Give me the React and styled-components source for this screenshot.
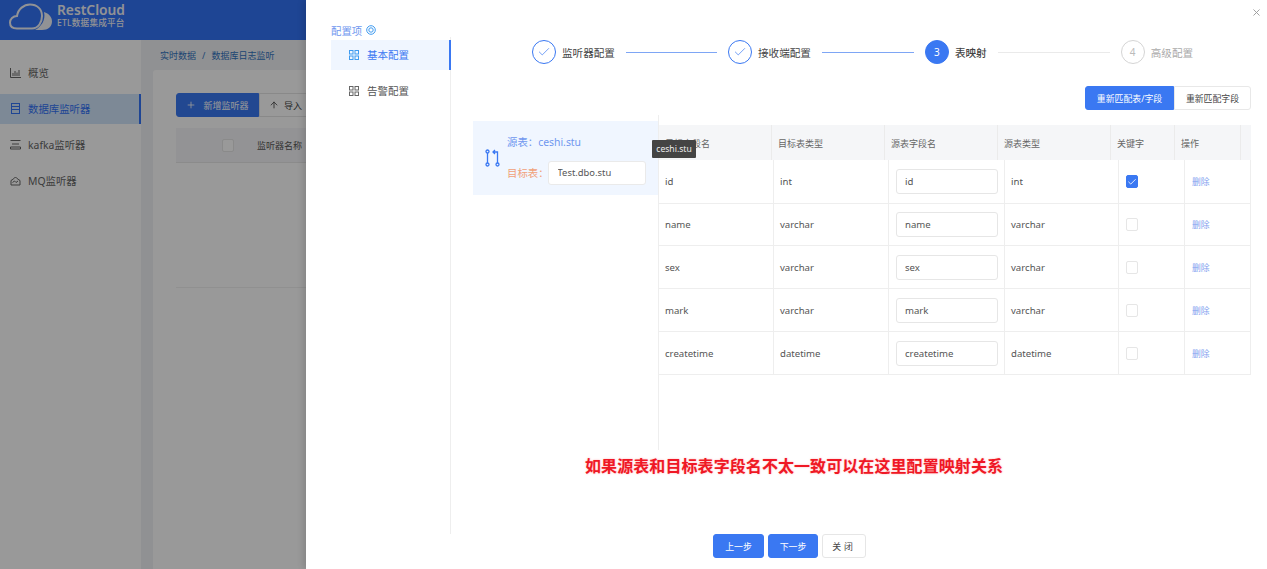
import React from "react";
import styled, { createGlobalStyle } from "styled-components";
import { Check, X, Plus, ArrowUp } from "lucide-react";

const GlobalStyle = createGlobalStyle`
  html, body {
    margin: 0;
    padding: 0;
    height: 100%;
    overflow: hidden;
    background: #fff;
  }
  * {
    box-sizing: border-box;
  }
  body, input, button {
    font-family: "Noto Sans", "Noto Sans CJK SC", sans-serif;
  }
`;

const Screen = styled.div`
  position: relative;
  width: 1267px;
  height: 569px;
  overflow: hidden;
`;

/* page behind the drawer */
const Page = styled.div`
  display: flex;
  flex-direction: column;
  height: 100%;
  background: #f0f2f5;
`;

const Header = styled.header`
  display: flex;
  align-items: center;
  gap: 5px;
  height: 40px;
  padding-left: 9px;
  background: #3273f7;
`;

const LogoMark = styled.svg`
  margin-top: -7px;
`;

const LogoText = styled.div`
  display: flex;
  flex-direction: column;
  color: #f2f4f8;
  margin-top: -10px;
`;

const LogoName = styled.span`
  font-size: 13.800px;
  font-weight: 600;
  line-height: 15px;
`;

const LogoSub = styled.span`
  font-size: 8.600px;
  font-weight: 500;
  line-height: 12px;
  letter-spacing: 0.2px;
`;

const PageBody = styled.div`
  display: flex;
  flex: 1;
`;

const Sidebar = styled.nav`
  width: 141px;
  padding-top: 18px;
  background: #fff;
`;

const SideItem = styled.div`
  display: flex;
  align-items: center;
  gap: 7px;
  height: 30px;
  margin-bottom: 6px;
  padding: 0 0 2px 10px;
  font-size: 10.4px;
  color: ${(p) => (p.$active ? "#3273f7" : "#666")};
  background: ${(p) => (p.$active ? "#d0e4fa" : "transparent")};
  border-right: ${(p) => (p.$active ? "2px solid #3273f7" : "none")};
`;

const Content = styled.main`
  flex: 1;
  padding: 9px 0 0 19px;
`;

const Crumbs = styled.div`
  display: flex;
  gap: 6px;
  height: 21px;
  font-size: 9px;
  line-height: 13px;
  color: #3273c0;
`;

const Card = styled.section`
  margin-left: -7px;
  height: 100%;
  padding: 23px 0 0 23px;
  background: #fff;
  border-radius: 3px;
`;

const Toolbar = styled.div`
  display: flex;
  height: 24px;
`;

const ToolButton = styled.div`
  display: flex;
  align-items: center;
  justify-content: center;
  gap: ${(p) => (p.$primary ? 7 : 5)}px;
  width: ${(p) => p.$w}px;
  font-size: 9px;
  color: ${(p) => (p.$primary ? "#fff" : "#444")};
  background: ${(p) => (p.$primary ? "#3a78f2" : "#fff")};
  border: 1px solid ${(p) => (p.$primary ? "#3a78f2" : "#e4e4e4")};
  border-radius: ${(p) => (p.$primary ? "3px 0 0 3px" : "0")};
`;

const GhostHead = styled.div`
  display: flex;
  align-items: center;
  height: 35px;
  margin-top: 11px;
  padding-left: 46px;
  gap: 23px;
  font-size: 9px;
  color: #555;
  background: #f5f6f8;
  border-bottom: 1px solid #e8e8e8;
`;

const GhostRule = styled.div`
  height: 1px;
  margin-top: 124px;
  background: #f0f0f0;
`;

const Mask = styled.div`
  position: absolute;
  inset: 0;
  background: rgba(0, 0, 0, 0.4);
`;

/* drawer */
const Drawer = styled.aside`
  position: absolute;
  top: 0;
  right: 0;
  bottom: 0;
  width: 961px;
  display: flex;
  flex-direction: column;
  background: #fff;
  box-shadow: -3px 0 6px rgba(0, 0, 0, 0.12);
`;

const CloseIcon = styled(X)`
  position: absolute;
  top: 7px;
  right: 5px;
  color: #999;
`;

const DrawerBody = styled.div`
  display: flex;
  height: 534px;
`;

const ConfigColumn = styled.div`
  display: flex;
  flex-direction: column;
  width: 145px;
  padding: 23px 0 0 25px;
`;

const ConfigTitle = styled.div`
  display: flex;
  align-items: center;
  gap: 4px;
  height: 14px;
  font-size: 10.4px;
  color: #6f97ef;
`;

const ConfigList = styled.div`
  flex: 1;
  padding-top: 3px;
  border-right: 1px solid #eeeeee;
`;

const ConfigItem = styled.div`
  display: flex;
  align-items: center;
  gap: 8px;
  height: 30px;
  margin-right: -1px;
  margin-bottom: 6px;
  padding: 0 0 1px 18px;
  font-size: 10.5px;
  color: ${(p) => (p.$active ? "#3a78f2" : "#555")};
  background: ${(p) => (p.$active ? "#f0f6ff" : "transparent")};
  border-right: ${(p) => (p.$active ? "2px solid #3a78f2" : "none")};
`;

const Main = styled.div`
  flex: 1;
  padding-top: 40px;
`;

const Steps = styled.div`
  display: flex;
  align-items: center;
  height: 24px;
  padding-left: 81px;
`;

const StepCircle = styled.div`
  display: flex;
  align-items: center;
  justify-content: center;
  width: 24px;
  height: 24px;
  border-radius: 50%;
  font-size: 10px;
  color: ${(p) => (p.$state === "wait" ? "#bbb" : p.$state === "now" ? "#fff" : "#3a78f2")};
  background: ${(p) => (p.$state === "now" ? "#3a78f2" : "#fff")};
  border: 1px solid ${(p) => (p.$state === "wait" ? "#d5d5d5" : "#3a78f2")};
`;

const StepLabel = styled.span`
  margin-left: 6px;
  font-size: 10.6px;
  font-weight: ${(p) => (p.$state === "now" ? 500 : 400)};
  color: ${(p) => (p.$state === "wait" ? "#aaa" : "#444")};
  white-space: nowrap;
`;

const StepLine = styled.div`
  width: ${(p) => p.$w}px;
  height: 1px;
  margin: 0 11px;
  background: ${(p) => (p.$done ? "#7ea6f5" : "#eaeaea")};
`;

const Actions = styled.div`
  display: flex;
  justify-content: flex-end;
  height: 24px;
  margin-top: 22px;
  padding-right: 16px;
`;

const ActionButton = styled.button`
  width: ${(p) => p.$w}px;
  padding: 0;
  font-size: 8.9px;
  color: ${(p) => (p.$primary ? "#fff" : "#444")};
  background: ${(p) => (p.$primary ? "#3a78f2" : "#fff")};
  border: 1px solid ${(p) => (p.$primary ? "#3a78f2" : "#e8e8e8")};
  border-radius: ${(p) => (p.$primary ? "3px 0 0 3px" : "0 3px 3px 0")};
`;

const MappingArea = styled.div`
  display: flex;
  height: 335px;
  margin: 5px 16px 0 22px;
`;

const TablePanel = styled.div`
  display: flex;
  align-items: center;
  gap: 7px;
  align-self: flex-start;
  width: 185px;
  height: 74px;
  margin-top: 6px;
  padding-left: 12px;
  background: #f0f6ff;
`;

const TableNames = styled.div`
  display: flex;
  flex-direction: column;
  gap: 9px;
`;

const NameRow = styled.div`
  display: flex;
  align-items: center;
  height: 24px;
  font-size: 10.4px;
  white-space: nowrap;
  color: ${(p) => (p.$target ? "#f0a078" : "#6f97ef")};
  margin-top: ${(p) => (p.$target ? "-2px" : "-2px")};
`;

const TargetInput = styled.input`
  width: 98px;
  height: 24px;
  margin-left: -1px;
  padding: 0 9px;
  font-size: 9.4px;
  color: #555;
  background: #fff;
  border: 1px solid #eaeaea;
  border-radius: 3px;
  outline: none;
`;

const TableWrap = styled.div`
  position: relative;
  width: 593px;
  padding-top: 10px;
  border-left: 1px solid #eeeeee;
`;

const Tooltip = styled.div`
  position: absolute;
  top: 25px;
  left: -7px;
  width: 44px;
  height: 18px;
  font-size: 8.6px;
  line-height: 18px;
  text-align: center;
  color: #eee;
  background: #444;
  border-radius: 1px;
`;

const HeadRow = styled.div`
  display: grid;
  grid-template-columns: 113px 113px 113px 113px 64px 66px 11px;
  height: 35px;
  background: #f5f6f8;
`;

const HeadCell = styled.div`
  display: flex;
  align-items: center;
  padding: 1px 0 0 6px;
  font-size: 9px;
  color: #666;
  border-right: ${(p) => (p.$plain ? "none" : "1px solid #ebebeb")};
`;

const BodyRow = styled.div`
  display: grid;
  grid-template-columns: 115px 115px 116px 114px 66px 66px;
  height: ${(p) => p.$h}px;
  border-bottom: 1px solid #eeeeee;
  border-right: 1px solid #eeeeee;
`;

const BodyCell = styled.div`
  display: flex;
  align-items: center;
  padding-left: ${(p) => (p.$wide ? 7 : 6)}px;
  font-size: 9.6px;
  color: #555;
  border-right: ${(p) => (p.$plain ? "none" : "1px solid #eeeeee")};
`;

const FieldInput = styled.input`
  width: 102px;
  height: 25px;
  padding: 0 8px;
  font-size: 9.6px;
  color: #555;
  background: #fff;
  border: 1px solid #e6e6e6;
  border-radius: 3px;
  outline: none;
`;

const Box = styled.span`
  display: flex;
  align-items: center;
  justify-content: center;
  width: 12px;
  height: 13px;
  color: #fff;
  background: ${(p) => (p.$on ? "#3a78f2" : "#fff")};
  border: 1px solid ${(p) => (p.$on ? "#3a78f2" : "#e6e6e6")};
  border-radius: 2px;
`;

const DeleteLink = styled.span`
  font-size: 8.8px;
  color: #7ea0ef;
`;

const Note = styled.div`
  margin: 4px 0 0 134px;
  font-size: 16px;
  font-weight: 700;
  line-height: 24px;
  letter-spacing: 0.08px;
  color: #ef1825;
  text-shadow: 0 0 2px rgba(255, 120, 130, 0.6);
  white-space: nowrap;
`;

const Footer = styled.footer`
  display: flex;
  justify-content: center;
  gap: 4px;
  padding-left: 6px;
`;

const FootButton = styled.button`
  width: ${(p) => p.$w}px;
  height: 24px;
  padding: 0;
  font-size: 8.9px;
  color: ${(p) => (p.$primary ? "#fff" : "#444")};
  background: ${(p) => (p.$primary ? "#3a78f2" : "#fff")};
  border: 1px solid ${(p) => (p.$primary ? "#3a78f2" : "#e6e6e6")};
  border-radius: 3px;
  letter-spacing: ${(p) => (p.$primary ? "0" : "3px")};
`;

const CloudLogo = () => (
  <LogoMark width="43" height="27" viewBox="0 0 43 27" fill="none">
    <path
      d="M8 25.500C3.500 25.500 1 23 1 19.500C1 16 4 13 8 13C9 6 15 1.500 21 1.500C28 1.500 33 6 33 13C33 19 29.500 25.500 23 25.500Z"
      stroke="#f2f4f8"
      strokeWidth="2"
    />
    <path d="M35 9C40 10.500 43 14 43 18.500C43 23.500 39 27 33 27H26C32 24 37 17 35 9Z" fill="#f2f4f8" />
  </LogoMark>
);

const ChartIcon = () => (
  <svg width="11" height="11" viewBox="0 0 11 11" fill="none" stroke="#666">
    <path d="M.5 1v9.500H11" />
    <path d="M3 9V6M5 9V4M7 9V5.500M9 9V3" />
  </svg>
);

const ListIcon = () => (
  <svg width="11" height="11" viewBox="0 0 11 11" fill="none" stroke="#3273f7">
    <rect x="1.500" y=".5" width="8" height="10" />
    <path d="M1.500 3.500h8M1.500 6.500h8" />
  </svg>
);

const KafkaIcon = () => (
  <svg width="11" height="11" viewBox="0 0 11 11" fill="none" stroke="#666">
    <path d="M.5 1.500h10M2 5h7M.5 8h10v2h-10z" />
  </svg>
);

const CloudIcon = () => (
  <svg width="11" height="11" viewBox="0 0 11 11" fill="none" stroke="#666">
    <path d="M1 10V5.500L3.500 4C4 2 7 2 7.500 4L10 5.500V10z" />
    <path d="M2.500 7.500l2-1.500 1.500 1.500 2-1.500" />
  </svg>
);

const TargetIcon = () => (
  <svg width="10" height="10" viewBox="0 0 10 10" fill="none" stroke="#3f9bf0">
    <circle cx="5" cy="5" r="4.300" />
    <circle cx="5" cy="5" r="2.200" />
  </svg>
);

const GridIcon = ({ color }) => (
  <svg width="10" height="10" viewBox="0 0 10 10" fill="none" stroke={color}>
    <rect x=".5" y=".5" width="3.500" height="3.500" />
    <rect x="6" y=".5" width="3.500" height="3.500" />
    <rect x=".5" y="6" width="3.500" height="3.500" />
    <rect x="6" y="6" width="3.500" height="3.500" />
  </svg>
);

const MapIcon = () => (
  <svg width="15" height="18" viewBox="0 0 15 18" fill="none" stroke="#3a78f2" strokeWidth="1.300">
    <circle cx="2.500" cy="2.500" r="1.500" />
    <circle cx="2.500" cy="15.500" r="1.500" />
    <circle cx="12.500" cy="15.500" r="1.500" />
    <path d="M2.500 4v10M12.500 14V3H8M10 1L8 3l2 2" />
  </svg>
);

const rows = [
  { name: "id", type: "int", key: true, h: 44 },
  { name: "name", type: "varchar", h: 42 },
  { name: "sex", type: "varchar", h: 43 },
  { name: "mark", type: "varchar", h: 43 },
  { name: "createtime", type: "datetime", h: 43 },
];

const App = () => {
  return (
    <Screen>
      <GlobalStyle />
      <Page>
        <Header>
          <CloudLogo />
          <LogoText>
            <LogoName>RestCloud</LogoName>
            <LogoSub>ETL数据集成平台</LogoSub>
          </LogoText>
        </Header>
        <PageBody>
          <Sidebar>
            <SideItem>
              <ChartIcon />
              概览
            </SideItem>
            <SideItem $active>
              <ListIcon />
              数据库监听器
            </SideItem>
            <SideItem>
              <KafkaIcon />
              kafka监听器
            </SideItem>
            <SideItem>
              <CloudIcon />
              MQ监听器
            </SideItem>
          </Sidebar>
          <Content>
            <Crumbs>
              <span>实时数据</span>
              <span>/</span>
              <span>数据库日志监听</span>
            </Crumbs>
            <Card>
              <Toolbar>
                <ToolButton $primary $w={83}>
                  <Plus size={10} />
                  新增监听器
                </ToolButton>
                <ToolButton $w={53}>
                  <ArrowUp size={10} />
                  导入
                </ToolButton>
              </Toolbar>
              <GhostHead>
                <Box />
                监听器名称
              </GhostHead>
              <GhostRule />
            </Card>
          </Content>
        </PageBody>
      </Page>
      <Mask />
      <Drawer>
        <CloseIcon size={11} />
        <DrawerBody>
          <ConfigColumn>
            <ConfigTitle>
              配置项
              <TargetIcon />
            </ConfigTitle>
            <ConfigList>
              <ConfigItem $active>
                <GridIcon color="#3f9bf0" />
                基本配置
              </ConfigItem>
              <ConfigItem>
                <GridIcon color="#666" />
                告警配置
              </ConfigItem>
            </ConfigList>
          </ConfigColumn>
          <Main>
            <Steps>
              <StepCircle $state="done">
                <Check size={14} strokeWidth={1.2} />
              </StepCircle>
              <StepLabel $state="done">监听器配置</StepLabel>
              <StepLine $done $w={91} />
              <StepCircle $state="done">
                <Check size={14} strokeWidth={1.2} />
              </StepCircle>
              <StepLabel $state="done">接收端配置</StepLabel>
              <StepLine $done $w={92} />
              <StepCircle $state="now">3</StepCircle>
              <StepLabel $state="now">表映射</StepLabel>
              <StepLine $w={112} />
              <StepCircle $state="wait">4</StepCircle>
              <StepLabel $state="wait">高级配置</StepLabel>
            </Steps>
            <Actions>
              <ActionButton $primary $w={89}>
                重新匹配表/字段
              </ActionButton>
              <ActionButton $w={77}>重新匹配字段</ActionButton>
            </Actions>
            <MappingArea>
              <TablePanel>
                <MapIcon />
                <TableNames>
                  <NameRow>源表：ceshi.stu</NameRow>
                  <NameRow $target>
                    目标表：
                    <TargetInput defaultValue="Test.dbo.stu" />
                  </NameRow>
                </TableNames>
              </TablePanel>
              <TableWrap>
                <HeadRow>
                  <HeadCell>目标字段名</HeadCell>
                  <HeadCell>目标表类型</HeadCell>
                  <HeadCell>源表字段名</HeadCell>
                  <HeadCell>源表类型</HeadCell>
                  <HeadCell>关键字</HeadCell>
                  <HeadCell>操作</HeadCell>
                  <HeadCell $plain />
                </HeadRow>
                {rows.map((row) => (
                  <BodyRow key={row.name} $h={row.h}>
                    <BodyCell>{row.name}</BodyCell>
                    <BodyCell>{row.type}</BodyCell>
                    <BodyCell $wide>
                      <FieldInput defaultValue={row.name} />
                    </BodyCell>
                    <BodyCell>{row.type}</BodyCell>
                    <BodyCell $wide>
                      <Box $on={row.key}>
                        {row.key && <Check size={10} strokeWidth={2} />}
                      </Box>
                    </BodyCell>
                    <BodyCell $plain $wide>
                      <DeleteLink>删除</DeleteLink>
                    </BodyCell>
                  </BodyRow>
                ))}
                <Tooltip>ceshi.stu</Tooltip>
              </TableWrap>
            </MappingArea>
            <Note>如果源表和目标表字段名不太一致可以在这里配置映射关系</Note>
          </Main>
        </DrawerBody>
        <Footer>
          <FootButton $primary $w={51}>
            上一步
          </FootButton>
          <FootButton $primary $w={50}>
            下一步
          </FootButton>
          <FootButton $w={44}>关闭</FootButton>
        </Footer>
      </Drawer>
    </Screen>
  );
};

export default App;
